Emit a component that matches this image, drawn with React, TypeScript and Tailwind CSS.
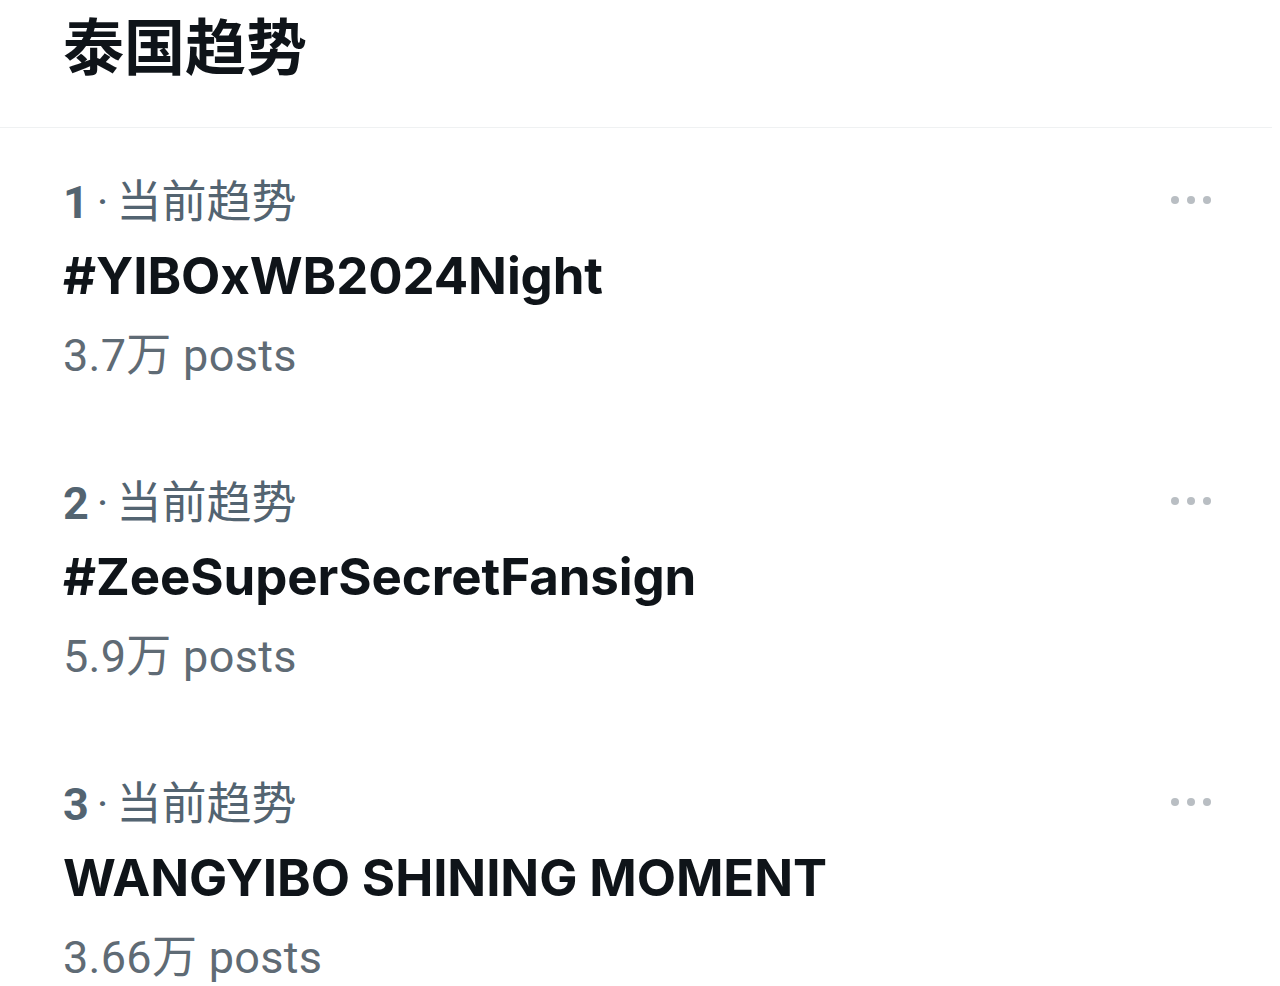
import React from 'react';

const trends = [
  { rank: 1, title: '#YIBOxWB2024Night', posts: '3.7万 posts' },
  { rank: 2, title: '#ZeeSuperSecretFansign', posts: '5.9万 posts' },
  { rank: 3, title: 'WANGYIBO SHINING MOMENT', posts: '3.66万 posts' },
];

function MoreDots() {
  return (
    <div className="self-start flex items-center gap-[8px] pt-[32px]">
      <span className="w-[8px] h-[8px] rounded-full bg-[#b9bec3]" />
      <span className="w-[8px] h-[8px] rounded-full bg-[#b9bec3]" />
      <span className="w-[8px] h-[8px] rounded-full bg-[#b9bec3]" />
    </div>
  );
}

export default function App() {
  return (
    <div
      className="w-[1280px] h-[986px] overflow-hidden bg-white text-[#0f1419]"
      style={{ fontFamily: 'Roboto, "Noto Sans CJK SC", sans-serif' }}
    >
      {/* Header */}
      <div className="h-[128px] border-b border-[#eff1f2] px-[63px] pt-[14px] mr-[8px]">
        <h1 className="text-[61px] leading-[70px] font-bold">泰国趋势</h1>
      </div>

      {/* Trend list */}
      <div className="pt-[36px]">
        {trends.map(t => (
          <div key={t.rank} className="flex justify-between pl-[63px] pr-[69px] h-[301px]">
            <div>
              <p className="text-[45px] leading-[78px] text-[#536471]">
                <span className="font-bold">{t.rank}</span>
                <span className="mx-[8px]">·</span>
                当前趋势
              </p>
              <p
                className="-mt-[5px] text-[51px] leading-[78px] font-bold tracking-[-0.1px]"
                style={{ fontFamily: 'Inter, "Noto Sans CJK SC", sans-serif' }}
              >
                {t.title}
              </p>
              <p className="text-[45px] leading-[82px] text-[#5f6b75] tracking-[0.3px]">{t.posts}</p>
            </div>
            <MoreDots />
          </div>
        ))}
      </div>
    </div>
  );
}
